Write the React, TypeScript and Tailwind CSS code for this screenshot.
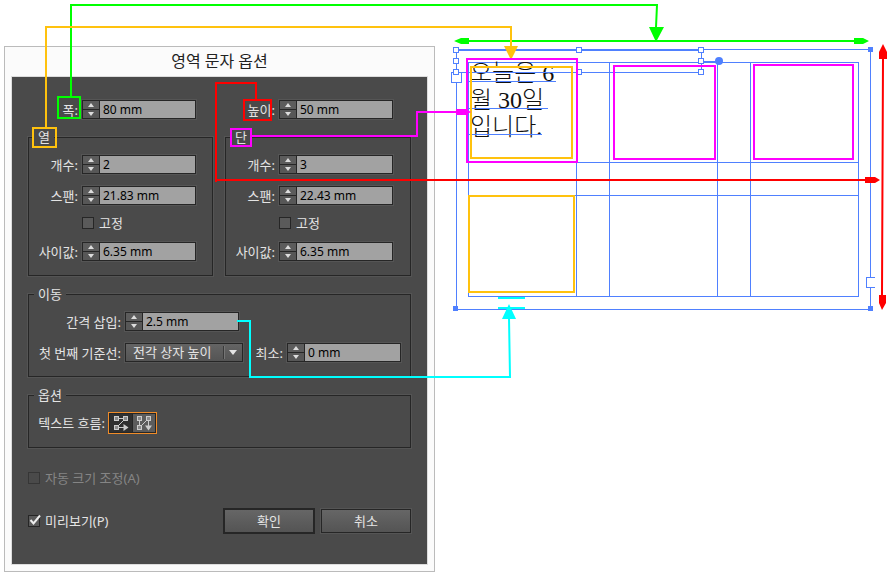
import { useState } from "react";
import type { ReactNode } from "react";
import clsx from "clsx";

const LINE = "#4f80ff";
const GREEN = "#00ff00";
const ORANGE = "#ffc20e";
const RED = "#ff0000";
const MAGENTA = "#ff00ff";
const CYAN = "#00ffff";

const handles = [
  [456, 50],
  [456, 61],
  [456, 72],
  [579, 50],
  [579, 72],
  [701, 50],
  [701, 61],
  [701, 72],
];

const corners = [
  [868, 47],
  [453, 306],
  [868, 306],
];

interface NumberFieldProps {
  id: string;
  label: string;
  initial: string;
  labelClass?: string;
}

const NumberField = ({ id, label, initial, labelClass = "w-[49px]" }: NumberFieldProps) => {
  const [value, setValue] = useState(initial);

  const step = (delta: number) => {
    const unit = value.includes("mm") ? " mm" : "";
    const next = Math.max(0, (parseFloat(value) || 0) + delta);
    setValue(`${+next.toFixed(2)}${unit}`);
  };

  return (
    <div className="flex h-[19px] items-center gap-1">
      <label htmlFor={id} className={clsx("shrink-0 whitespace-nowrap text-right", labelClass)}>
        {label}
      </label>
      <div className="flex h-[19px] w-[114px] border border-[#262626] bg-[#a2a2a2] outline outline-[#555555]">
        <div className="flex w-[17px] shrink-0 flex-col border-r border-[#262626]">
          <button
            type="button"
            aria-label={`${label} +`}
            onClick={() => step(1)}
            className="flex h-2 items-center justify-center bg-[#5c5c5c]"
          >
            <svg width="6" height="4" viewBox="0 0 6 4">
              <path d="M3 0 L6 4 H0 Z" fill="#dddddd" />
            </svg>
          </button>
          <button
            type="button"
            aria-label={`${label} -`}
            onClick={() => step(-1)}
            className="flex h-[9px] items-center justify-center border-t border-[#262626] bg-[#575757]"
          >
            <svg width="6" height="4" viewBox="0 0 6 4">
              <path d="M0 0 H6 L3 4 Z" fill="#dddddd" />
            </svg>
          </button>
        </div>
        <input
          id={id}
          value={value}
          onChange={(e) => setValue(e.target.value)}
          className="w-full min-w-0 bg-transparent px-[3px] text-[12px] leading-4 text-black outline-none"
        />
      </div>
    </div>
  );
};

interface CheckProps {
  id: string;
  label: string;
  defaultChecked?: boolean;
  disabled?: boolean;
  className?: string;
}

const Check = ({ id, label, defaultChecked, disabled, className }: CheckProps) => (
  <div className={clsx("flex h-3 items-center gap-[5px]", className)}>
    <span className="relative flex size-3 shrink-0">
      <input
        id={id}
        type="checkbox"
        defaultChecked={defaultChecked}
        disabled={disabled}
        className="peer size-3 appearance-none border border-[#262626] bg-[#5a5a5a] disabled:border-[#363636] disabled:bg-[#4a4a4a]"
      />
      <svg
        className="pointer-events-none absolute left-0 top-0 hidden overflow-visible peer-checked:block"
        width="12"
        height="12"
        viewBox="0 0 12 12"
      >
        <path d="M2.5 5 L5.5 8.5 L12 0.5" fill="none" stroke="#eeeeee" strokeWidth="2" />
      </svg>
    </span>
    <label htmlFor={id} className={disabled ? "text-[#858585]" : undefined}>
      {label}
    </label>
  </div>
);

const Group = ({ title, className, children }: { title: string; className?: string; children: ReactNode }) => (
  <fieldset className={clsx("min-w-0 border border-[#262626] shadow-[0_0_0_1px_#545454]", className)}>
    <legend className="ml-[5px] bg-[#4a4a4a] px-1 leading-4">{title}</legend>
    {children}
  </fieldset>
);

const SizeGroup = ({ id, title, count, span }: { id: string; title: string; count: string; span: string }) => (
  <Group title={title} className="pb-[14px] pt-[10px]">
    <div className="flex flex-col gap-3">
      <NumberField id={`${id}-count`} label="개수:" initial={count} />
      <NumberField id={`${id}-span`} label="스팬:" initial={span} />
      <Check id={`${id}-fixed`} label="고정" className="mb-px ml-[53px]" />
      <NumberField id={`${id}-gutter`} label="사이값:" initial="6.35 mm" />
    </div>
  </Group>
);

const FlowIcon = ({ vertical }: { vertical?: boolean }) => (
  <svg width="16" height="16" viewBox="0 0 16 16" fill="none" stroke="#cccccc">
    <rect x="1.5" y="1.5" width="4" height="4" fill="#8a8a8a" />
    <rect x="10.5" y="1.5" width="4" height="4" fill="#8a8a8a" />
    <rect x="1.5" y="10.5" width="4" height="4" fill="#8a8a8a" />
    {vertical ? (
      <>
        <path d="M3.5 6 V10 M5.5 10.5 L10.5 5.5 M12.5 6 V11" />
        <path d="M9 10.5 H16 L12.5 15.5 Z" fill="#cccccc" stroke="none" />
      </>
    ) : (
      <>
        <path d="M6 3.5 H10 M10.5 5.5 L5.5 10.5 M6 12.5 H11" />
        <path d="M10.5 9 V16 L15.5 12.5 Z" fill="#cccccc" stroke="none" />
      </>
    )}
  </svg>
);

const OptionsDialog = () => {
  const [flow, setFlow] = useState("row");

  return (
    <section
      aria-label="영역 문자 옵션"
      className="ml-1 mt-[46px] w-[431px] shrink-0 self-start border border-[#bbbbbb] bg-[#fbfbfb] px-[6px] pb-[6px]"
    >
      <h1 className="h-[29px] text-center text-[16px] leading-[29px] text-[#222222]">영역 문자 옵션</h1>
      <form
        onSubmit={(e) => e.preventDefault()}
        className="border border-[#dddddd] bg-[#4a4a4a] px-4 pb-[30px] pt-[23px] text-[13px] leading-4 text-[#e4e4e4]"
      >
        <div className="grid grid-cols-[185fr_186fr] gap-x-3">
          <NumberField id="width" label="폭:" initial="80 mm" labelClass="w-[50px]" />
          <NumberField id="height" label="높이:" initial="50 mm" labelClass="w-[50px]" />
        </div>
        <div className="mt-[10px] grid grid-cols-[185fr_186fr] gap-x-3">
          <SizeGroup id="rows" title="열" count="2" span="21.83 mm" />
          <SizeGroup id="columns" title="단" count="3" span="22.43 mm" />
        </div>

        <Group title="이동" className="mt-[10px] pb-[14px] pt-[10px]">
          <div className="flex flex-col gap-3">
            <NumberField id="inset" label="간격 삽입:" initial="2.5 mm" labelClass="w-[92px]" />
            <div className="flex h-[19px] items-center gap-1">
              <label htmlFor="baseline" className="w-[92px] shrink-0 whitespace-nowrap text-right">
                첫 번째 기준선:
              </label>
              <div className="relative h-[19px] w-[118px] border border-[#262626] bg-linear-to-b from-[#646464] to-[#545454] outline outline-[#555555]">
                <select
                  id="baseline"
                  className="block h-[17px] w-full appearance-none bg-transparent pl-[7px] leading-[17px] outline-none"
                >
                  <option>전각 상자 높이</option>
                </select>
                <svg className="pointer-events-none absolute right-0 top-0" width="21" height="17" viewBox="0 0 21 17">
                  <path d="M2.5 2 V15" stroke="#3a3a3a" />
                  <path d="M3.5 2 V15" stroke="#757575" />
                  <path d="M8 6 H16 L12 11 Z" fill="#e4e4e4" />
                </svg>
              </div>
              <NumberField id="minimum" label="최소:" initial="0 mm" labelClass="w-[36px]" />
            </div>
          </div>
        </Group>

        <Group title="옵션" className="mt-[10px] pb-[13px] pt-[9px]">
          <div className="flex h-[22px] items-center gap-[3px]">
            <span className="w-[76px] shrink-0 whitespace-nowrap text-right">텍스트 흐름:</span>
            <div className="flex h-[22px] border border-[#f08c28] bg-[#262626] p-px">
              <button
                type="button"
                aria-label="행 방향"
                onClick={() => setFlow("row")}
                className={clsx("flex w-[22px] items-center justify-center", flow === "row" ? "bg-[#303030]" : "bg-[#5c5c5c]")}
              >
                <FlowIcon />
              </button>
              <button
                type="button"
                aria-label="열 방향"
                onClick={() => setFlow("column")}
                className={clsx(
                  "ml-px flex w-[22px] items-center justify-center",
                  flow === "column" ? "bg-[#303030]" : "bg-[#5c5c5c]"
                )}
              >
                <FlowIcon vertical />
              </button>
            </div>
          </div>
        </Group>

        <Check id="auto-size" label="자동 크기 조정(A)" disabled className="mt-6" />

        <div className="mt-6 flex items-center">
          <Check id="preview" label="미리보기(P)" defaultChecked />
          <button
            type="submit"
            className="ml-auto h-[26px] w-[92px] border-2 border-[#262626] bg-linear-to-b from-[#666666] to-[#545454]"
          >
            확인
          </button>
          <button
            type="button"
            className="ml-[6px] h-6 w-[90px] border border-[#262626] bg-linear-to-b from-[#666666] to-[#545454] outline outline-[#555555]"
          >
            취소
          </button>
        </div>
      </form>
    </section>
  );
};

// Text frame on the artboard, in page coordinates
const TextFrame = () => (
  <svg
    className="ml-[13px] shrink-0"
    width="442"
    height="320"
    viewBox="448 0 442 320"
    fill="none"
    stroke={LINE}
    shapeRendering="crispEdges"
  >
    <rect x="456.5" y="49.5" width="414" height="260" />
    <rect x="468.5" y="62.5" width="390" height="234" />
    <path d="M576.5 62V296 M609.5 62V296 M717.5 62V296 M750.5 62V296" />
    <path d="M468 162.5H858 M468 195.5H858" />

    <g
      fill="#111111"
      stroke="none"
      fontSize="24"
      fontFamily="'Liberation Serif', 'Noto Sans CJK KR', serif"
      fontWeight="300"
    >
      <text x="470" y="81">오늘은 6</text>
      <text x="470" y="108">월 30일</text>
      <text x="470" y="135">입니다.</text>
    </g>
    <path d="M468 81.5H556 M468 108.5H548 M468 134.5H542" />

    <path d="M456 50H701" strokeWidth="2" />
    <path d="M456 72.5H701 M701.5 50V72" />
    <path d="M701 61.5H719" strokeWidth="2" />
    <circle cx="719" cy="61" r="4" fill={LINE} stroke="none" shapeRendering="auto" />
    <rect x="451.5" y="72.5" width="10" height="10" fill="#ffffff" />
    {handles.map(([x, y]) => (
      <rect key={`${x}-${y}`} x={x - 2.5} y={y - 2.5} width="5" height="5" fill="#ffffff" />
    ))}
    {corners.map(([x, y]) => (
      <rect key={`${x}-${y}`} x={x} y={y} width="5" height="5" fill={LINE} stroke="none" />
    ))}
    <rect x="866" y="277" width="9" height="11" fill="#ffffff" stroke="none" />
    <path d="M875 277.5H866.5V287.5H875" />
  </svg>
);

// Coloured arrows that tie each setting to its place in the frame
const Callouts = () => (
  <svg
    className="pointer-events-none absolute left-0 top-0"
    width="890"
    height="400"
    viewBox="0 0 890 400"
    fill="none"
    strokeWidth="2"
  >
    <g stroke={GREEN}>
      <rect x="58" y="97" width="22" height="21" />
      <path d="M71 96V5H657L656 27 M460 41H864" />
      <path
        d="M649 27H664L656 42Z M454 41L461 38H469V44H461Z M869 41L863 38H854V44H863Z"
        fill={GREEN}
        stroke="none"
      />
    </g>
    <g stroke={ORANGE}>
      <rect x="33" y="128" width="23" height="19" />
      <path d="M46 127V27H511V46" />
      <path d="M504 46H518L511 60Z" fill={ORANGE} stroke="none" />
      <rect x="471" y="67" width="101" height="91" />
      <rect x="469" y="196" width="105" height="96" />
    </g>
    <g stroke={MAGENTA}>
      <rect x="231" y="129" width="20" height="17" />
      <path d="M252 136H417V112H458" />
      <rect x="467" y="59" width="110" height="103" />
      <rect x="614" y="66" width="101" height="93" />
      <rect x="754" y="65" width="99" height="94" />
      <path d="M456 109H466L471 112L466 115H456Z" fill={MAGENTA} stroke="none" />
    </g>
    <g stroke={RED}>
      <rect x="244" y="100" width="27" height="20" />
      <path d="M256 99V83H216V182 M216 180H866 M883 58L882 296" />
      <path
        d="M865 177H875L880 180L875 183H865Z M883 44L887 52V59H879V52Z M879 295H886V303L882 310L879 303Z"
        fill={RED}
        stroke="none"
      />
    </g>
    <g stroke={CYAN}>
      <path d="M237 321H250V377H510L509 318 M498 298H525 M498 308H525" />
      <path d="M502 319H516L509 304Z" fill={CYAN} stroke="none" />
    </g>
  </svg>
);

const App = () => {
  return (
    <main className="relative flex min-h-screen items-start overflow-hidden bg-white font-['Noto_Sans','Noto_Sans_CJK_KR',sans-serif]">
      <OptionsDialog />
      <TextFrame />
      <Callouts />
    </main>
  );
};

export default App;
